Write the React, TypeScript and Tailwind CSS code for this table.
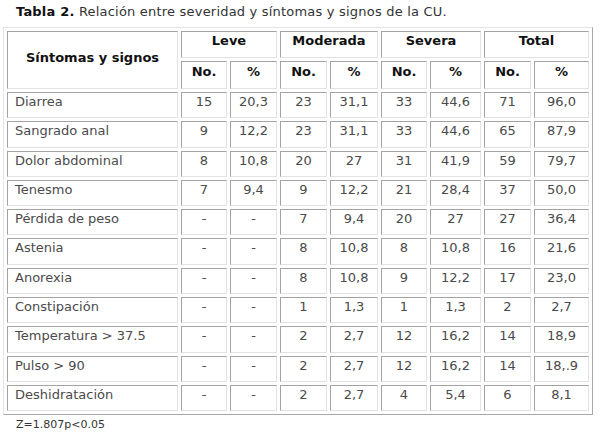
const groups = ["Leve", "Moderada", "Severa", "Total"];

const rows: string[][] = [
  ["Diarrea", "15", "20,3", "23", "31,1", "33", "44,6", "71", "96,0"],
  ["Sangrado anal", "9", "12,2", "23", "31,1", "33", "44,6", "65", "87,9"],
  ["Dolor abdominal", "8", "10,8", "20", "27", "31", "41,9", "59", "79,7"],
  ["Tenesmo", "7", "9,4", "9", "12,2", "21", "28,4", "37", "50,0"],
  ["Pérdida de peso", "-", "-", "7", "9,4", "20", "27", "27", "36,4"],
  ["Astenia", "-", "-", "8", "10,8", "8", "10,8", "16", "21,6"],
  ["Anorexia", "-", "-", "8", "10,8", "9", "12,2", "17", "23,0"],
  ["Constipación", "-", "-", "1", "1,3", "1", "1,3", "2", "2,7"],
  ["Temperatura > 37.5", "-", "-", "2", "2,7", "12", "16,2", "14", "18,9"],
  ["Pulso > 90", "-", "-", "2", "2,7", "12", "16,2", "14", "18,.9"],
  ["Deshidratación", "-", "-", "2", "2,7", "4", "5,4", "6", "8,1"],
];

const cell =
  "border border-t-[#a3a3a3] border-l-[#a3a3a3] border-r-[#e2e2e2] border-b-[#e2e2e2]";

export default function App() {
  return (
    <div className="w-[601px] h-[432px] bg-white text-[13px] leading-[17px] text-[#4a4a4a] font-['DejaVu_Sans','Liberation_Sans',sans-serif]">
      <p className="pl-[16px] pt-[3px] h-[27px] text-[#333] tracking-[0.2px]">
        <b className="text-[#111]">Tabla 2.</b> Relación entre severidad y síntomas y signos de la CU.
      </p>

      <div className="ml-[3px] w-[590px] p-[3px] border border-t-[#e4e4e4] border-l-[#e4e4e4] border-r-[#a8a8a8] border-b-[#a8a8a8]">
        <div className="grid grid-cols-[171px_46px_47px_47px_48px_46px_51px_47px_55px] grid-rows-[27px_28px_repeat(11,26.3px)] gap-[3px]">
          <div className={`${cell} row-span-2 flex items-center justify-center pb-[5px] font-bold text-[#111]`}>
            Síntomas y signos
          </div>
          {groups.map((g) => (
            <div key={g} className={`${cell} col-span-2 text-center font-bold text-[#111]`}>
              {g}
            </div>
          ))}
          {groups.map((g) => (
            <>
              <div key={g + "n"} className={`${cell} text-center pt-[1px] font-bold text-[#111]`}>
                No.
              </div>
              <div key={g + "p"} className={`${cell} text-center pt-[1px] font-bold text-[#111]`}>
                %
              </div>
            </>
          ))}
          {rows.map((r) =>
            r.map((v, i) => (
              <div
                key={r[0] + i}
                className={`${cell} whitespace-nowrap ${i === 0 ? "pl-[7px]" : "text-center"}`}
              >
                {v}
              </div>
            ))
          )}
        </div>
      </div>

      <p className="pl-[16px] pt-[3px] text-[11px] leading-[14px] text-[#333]">Z=1.807p&lt;0.05</p>
    </div>
  );
}
